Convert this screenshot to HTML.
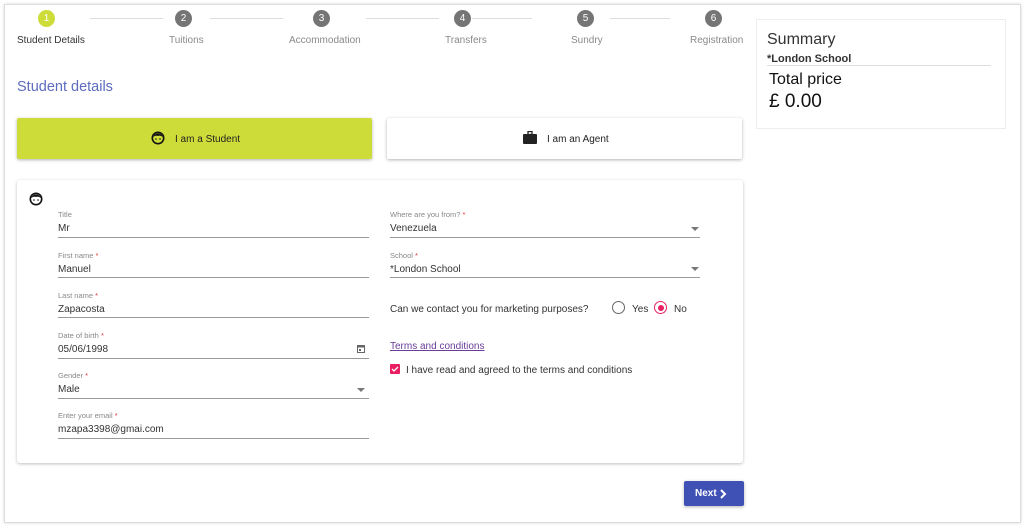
<!DOCTYPE html><html><head><style>
body{margin:0;width:1024px;height:528px;background:#fff;font-family:"Liberation Sans",sans-serif;position:relative;overflow:hidden}
.a{position:absolute}
.frame{left:4px;top:4px;width:1015px;height:517px;border:1px solid #ddd;box-shadow:0 0 3px rgba(0,0,0,.15)}
.c{width:17px;height:17px;border-radius:50%;background:#757575;color:#fff;font-size:10px;text-align:center;line-height:17px;top:10px}
.sl{font-size:10px;color:#8a8a8a;top:35px;white-space:nowrap}
.ln{height:1px;background:#ddd;top:18px}
.lbl{font-size:7.5px;color:#888;margin-top:1px}
.lbl b{color:#e53935;font-weight:normal}
.val{font-size:10px;color:#333;margin-top:1px}
.ul{height:1px;background:#999}
.arr{width:0;height:0;border-left:4px solid transparent;border-right:4px solid transparent;border-top:4px solid #777}
</style></head><body>
<div class="a frame"></div>
<div class="a c" style="left:38px;background:#cddc39">1</div>
<div class="a c" style="left:175px">2</div>
<div class="a c" style="left:313px">3</div>
<div class="a c" style="left:454px">4</div>
<div class="a c" style="left:577px">5</div>
<div class="a c" style="left:705px">6</div>
<div class="a ln" style="left:90px;width:73px"></div>
<div class="a ln" style="left:210px;width:73px"></div>
<div class="a ln" style="left:366px;width:73px"></div>
<div class="a ln" style="left:472px;width:60px"></div>
<div class="a ln" style="left:610px;width:60px"></div>
<div class="a sl" style="left:17px;color:#333">Student Details</div>
<div class="a sl" style="left:169px">Tuitions</div>
<div class="a sl" style="left:289px">Accommodation</div>
<div class="a sl" style="left:445px">Transfers</div>
<div class="a sl" style="left:571px">Sundry</div>
<div class="a sl" style="left:690px">Registration</div>
<div class="a" style="left:17px;top:79px;font-size:14.5px;color:#5c6bc0">Student details</div>
<div class="a" style="left:17px;top:118px;width:355px;height:41px;background:#cddc39;border-radius:2px;box-shadow:0 1px 3px rgba(0,0,0,.3)"></div>
<svg class="a" style="left:151px;top:131px" width="14" height="14" viewBox="0 0 14 14"><circle cx="7" cy="7" r="5.7" fill="none" stroke="#111" stroke-width="1.6"/><path d="M2 6Q4 2 7 2.5Q10 2 12 6Q9 4 7 5Q5 4 2 6Z" fill="#111"/><circle cx="5" cy="8" r=".8" fill="#111"/><circle cx="9" cy="8" r=".8" fill="#111"/></svg>
<div class="a" style="left:175px;top:134px;font-size:10px;color:#222">I am a Student</div>
<div class="a" style="left:387px;top:118px;width:355px;height:41px;background:#fff;border-radius:2px;box-shadow:0 1px 3px rgba(0,0,0,.3)"></div>
<svg class="a" style="left:523px;top:131px" width="14" height="13" viewBox="0 0 14 13"><rect x="5" y="0.5" width="4" height="3" fill="none" stroke="#222" stroke-width="1.3"/><rect x="0" y="3" width="14" height="10" rx="1" fill="#222"/></svg>
<div class="a" style="left:547px;top:134px;font-size:10px;color:#222">I am an Agent</div>
<div class="a" style="left:756px;top:19px;width:248px;height:108px;border:1px solid #eee"></div>
<div class="a" style="left:767px;top:31px;font-size:16px;color:#333">Summary</div>
<div class="a" style="left:767px;top:53px;font-size:11px;color:#333;font-weight:bold">*London School</div>
<div class="a" style="left:767px;top:65px;width:224px;height:1px;background:#ddd"></div>
<div class="a" style="left:769px;top:71px;font-size:16px;color:#111">Total price</div>
<div class="a" style="left:769px;top:91px;font-size:19px;color:#111">£ 0.00</div>
<div class="a" style="left:17px;top:180px;width:726px;height:283px;background:#fff;border-radius:3px;box-shadow:0 1px 3px rgba(0,0,0,.25)"></div>
<svg class="a" style="left:29px;top:192px" width="14" height="14" viewBox="0 0 14 14"><circle cx="7" cy="7" r="5.7" fill="none" stroke="#111" stroke-width="1.6"/><path d="M2 6Q4 2 7 2.5Q10 2 12 6Q9 4 7 5Q5 4 2 6Z" fill="#111"/><circle cx="5" cy="8" r=".8" fill="#111"/><circle cx="9" cy="8" r=".8" fill="#111"/></svg>

<div class="a lbl" style="left:58px;top:209px">Title</div><div class="a val" style="left:58px;top:222px">Mr</div><div class="a ul" style="left:58px;top:237px;width:311px"></div>
<div class="a lbl" style="left:58px;top:250px">First name <b>*</b></div><div class="a val" style="left:58px;top:263px">Manuel</div><div class="a ul" style="left:58px;top:277px;width:311px"></div>
<div class="a lbl" style="left:58px;top:290px">Last name <b>*</b></div><div class="a val" style="left:58px;top:303px">Zapacosta</div><div class="a ul" style="left:58px;top:317px;width:311px"></div>
<div class="a lbl" style="left:58px;top:330px">Date of birth <b>*</b></div><div class="a val" style="left:58px;top:343px">05/06/1998</div><div class="a ul" style="left:58px;top:358px;width:311px"></div>
<svg class="a" style="left:357px;top:344px" width="8" height="9" viewBox="0 0 8 9"><rect x="0.5" y="1.5" width="7" height="7" fill="none" stroke="#666"/><rect x="0.5" y="1.5" width="7" height="2" fill="#666"/><rect x="2" y="5" width="2" height="2" fill="#666"/></svg>
<div class="a lbl" style="left:58px;top:370px">Gender <b>*</b></div><div class="a val" style="left:58px;top:383px">Male</div><div class="a ul" style="left:58px;top:398px;width:311px"></div><div class="a arr" style="left:357px;top:388px"></div>
<div class="a lbl" style="left:58px;top:410px">Enter your email <b>*</b></div><div class="a val" style="left:58px;top:423px">mzapa3398@gmai.com</div><div class="a ul" style="left:58px;top:438px;width:311px"></div>

<div class="a lbl" style="left:390px;top:209px">Where are you from? <b>*</b></div><div class="a val" style="left:390px;top:222px">Venezuela</div><div class="a ul" style="left:390px;top:237px;width:310px"></div><div class="a arr" style="left:691px;top:227px"></div>
<div class="a lbl" style="left:390px;top:250px">School <b>*</b></div><div class="a val" style="left:390px;top:263px">*London School</div><div class="a ul" style="left:390px;top:277px;width:310px"></div><div class="a arr" style="left:691px;top:267px"></div>
<div class="a val" style="left:390px;top:303px">Can we contact you for marketing purposes?</div>
<div class="a" style="left:612px;top:301px;width:11px;height:11px;border:1.5px solid #666;border-radius:50%"></div>
<div class="a val" style="left:632px;top:303px">Yes</div>
<div class="a" style="left:654px;top:301px;width:11px;height:11px;border:1.5px solid #e91e63;border-radius:50%"></div>
<div class="a" style="left:658px;top:305px;width:6px;height:6px;background:#e91e63;border-radius:50%"></div>
<div class="a val" style="left:674px;top:303px">No</div>
<div class="a val" style="left:390px;top:340px;color:#6a3d9a;text-decoration:underline">Terms and conditions</div>
<div class="a" style="left:390px;top:364px;width:10px;height:10px;background:#e91e63;border-radius:1px"></div>
<svg class="a" style="left:391px;top:365px" width="8" height="8" viewBox="0 0 8 8"><path d="M1 4L3 6L7 2" fill="none" stroke="#fff" stroke-width="1.3"/></svg>
<div class="a val" style="left:406px;top:364px">I have read and agreed to the terms and conditions</div>
<div class="a" style="left:684px;top:481px;width:60px;height:25px;background:#3f51b5;border-radius:2px;box-shadow:0 1px 3px rgba(0,0,0,.3);color:#fff;font-size:10px;font-weight:bold;line-height:26px;text-indent:11px">Next</div>
<svg class="a" style="left:719px;top:489px" width="8" height="10" viewBox="0 0 8 10"><path d="M2 1L6 5L2 9" fill="none" stroke="#fff" stroke-width="2"/></svg>
</body></html>
